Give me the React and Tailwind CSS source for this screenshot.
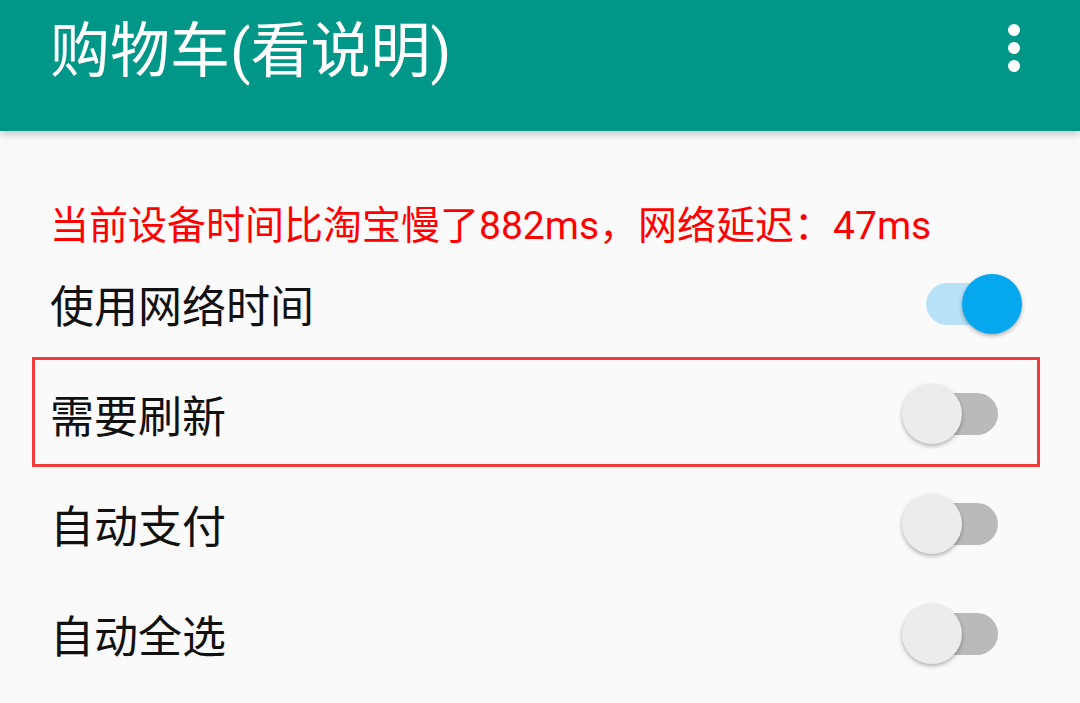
import React from "react";

function Switch({ on }) {
  return (
    <div className="relative w-[120px] h-[62px] shrink-0 mb-[8px]">
      <div
        className={
          "absolute left-[24px] top-[10px] w-[72px] h-[42px] rounded-full " +
          (on ? "bg-[#b8e2f8]" : "bg-[#bababa]")
        }
      />
      <div
        className={
          "absolute top-[1px] w-[60px] h-[60px] rounded-full shadow-[0_2px_4px_rgba(0,0,0,0.3)] " +
          (on ? "left-[60px] bg-[#05a8ee]" : "left-0 bg-[#ececec]")
        }
      />
    </div>
  );
}

function Row({ label, on, boxed }) {
  return (
    <div className="relative h-[110px] flex items-center justify-between pl-[50px] pr-[58px]">
      <span className="text-[44px] leading-none text-[#111111]">{label}</span>
      <Switch on={on} />
      {boxed && (
        <div className="absolute left-[32px] right-[40px] top-[-6px] h-[110px] border-[3px] border-[#f23c3c] pointer-events-none" />
      )}
    </div>
  );
}

export default function App() {
  return (
    <div
      className="w-[1080px] h-[703px] bg-[#fafafa] overflow-hidden relative"
      style={{ fontFamily: '"Roboto", "Noto Sans CJK SC", sans-serif' }}
    >
      <header className="relative z-10 h-[131px] bg-[#009688] flex items-start pl-[50px] pr-[60px] shadow-[0_3px_8px_rgba(0,0,0,0.22)]">
        <h1 className="pt-[22px] text-white text-[60px] leading-none font-normal flex-1">
          购物车(看说明)
        </h1>
        <div className="pt-[24px] flex flex-col gap-[6px]">
          <span className="block w-[12px] h-[12px] rounded-full bg-white" />
          <span className="block w-[12px] h-[12px] rounded-full bg-white" />
          <span className="block w-[12px] h-[12px] rounded-full bg-white" />
        </div>
      </header>
      <main className="pt-[76px]">
        <p className="pl-[50px] text-[39px] leading-[39px] text-[#f00] whitespace-nowrap">
          当前设备时间比淘宝慢了882ms，网络延迟：47ms
        </p>
        <div className="mt-[7px]">
          <Row label="使用网络时间" on />
          <Row label="需要刷新" boxed />
          <Row label="自动支付" />
          <Row label="自动全选" />
        </div>
      </main>
    </div>
  );
}
